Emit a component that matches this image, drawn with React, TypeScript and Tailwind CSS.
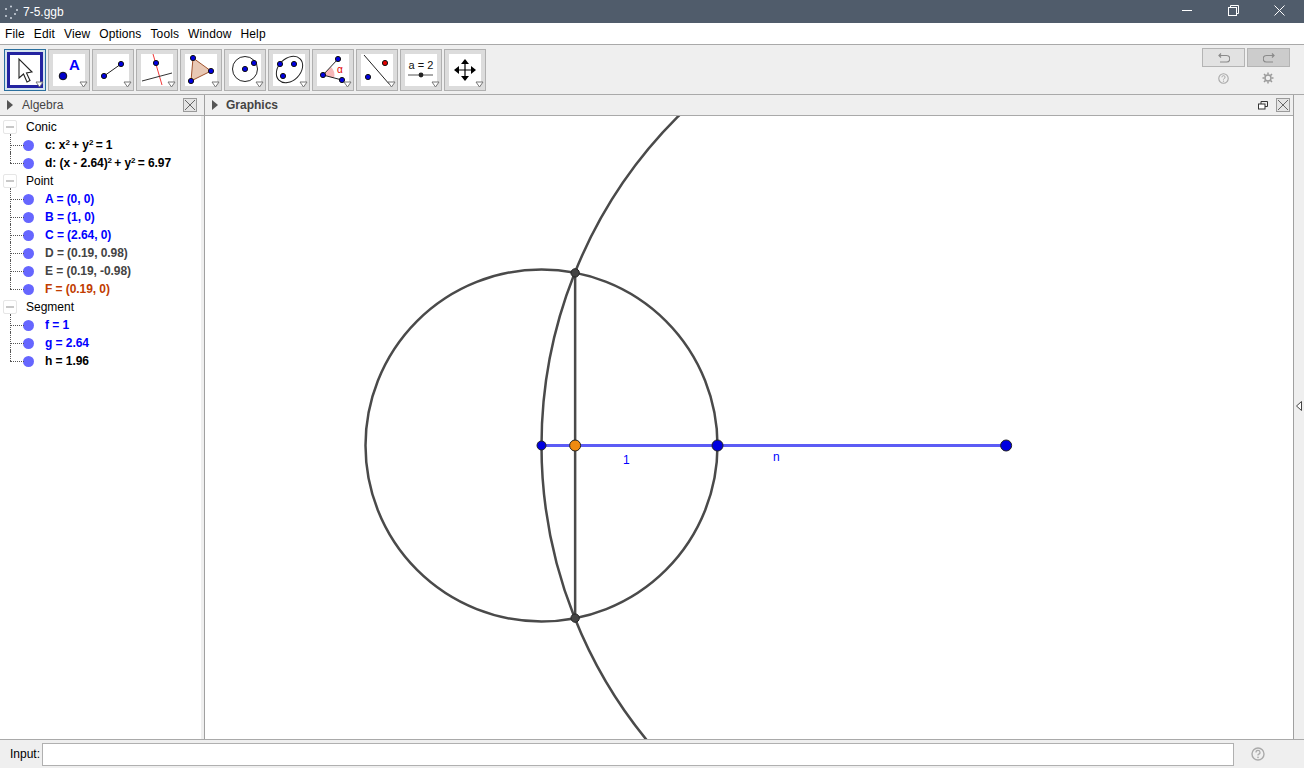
import type { ReactNode } from "react";

const MENU = ["File", "Edit", "View", "Options", "Tools", "Window", "Help"];

type TreeGroup = { title: string; items: { text: ReactNode; color: string }[] };

const SQ = <sup className="-mr-[1px] text-[8px] leading-none">2</sup>;

const TREE: TreeGroup[] = [
  {
    title: "Conic",
    items: [
      { text: <>c: x{SQ} + y{SQ} = 1</>, color: "text-black" },
      { text: <>d: (x - 2.64){SQ} + y{SQ} = 6.97</>, color: "text-black" },
    ],
  },
  {
    title: "Point",
    items: [
      { text: "A = (0, 0)", color: "text-[#0000ff]" },
      { text: "B = (1, 0)", color: "text-[#0000ff]" },
      { text: "C = (2.64, 0)", color: "text-[#0000ff]" },
      { text: "D = (0.19, 0.98)", color: "text-[#444444]" },
      { text: "E = (0.19, -0.98)", color: "text-[#444444]" },
      { text: "F = (0.19, 0)", color: "text-[#c13c00]" },
    ],
  },
  {
    title: "Segment",
    items: [
      { text: "f = 1", color: "text-[#0000ff]" },
      { text: "g = 2.64", color: "text-[#0000ff]" },
      { text: "h = 1.96", color: "text-black" },
    ],
  },
];

const B = "#0000e0";

// toolbar icons, all drawn in a 32x32 box
const TOOL_ICONS: ReactNode[] = [
  <path key="a" d="M10 5 L10 24 L14.5 20 L18 28 L21 26.5 L17.5 19 L23 18 Z" fill="#fff" stroke="#222" strokeWidth="1.1" />,
  <g key="b">
    <circle cx="10" cy="22" r="3.8" fill="#0000c8" stroke="#111" />
    <text x="16" y="16" fontSize="15" fontWeight="700" fill="#0000ff" fontFamily="Liberation Sans, sans-serif">A</text>
  </g>,
  <g key="c">
    <line x1="7" y1="22" x2="24" y2="10" stroke="#222" />
    <circle cx="7" cy="22" r="2.6" fill={B} stroke="#111" />
    <circle cx="24" cy="10" r="2.6" fill={B} stroke="#111" />
  </g>,
  <g key="d">
    <line x1="12" y1="0" x2="21" y2="31" stroke="#f03838" />
    <line x1="1" y1="27" x2="31" y2="19" stroke="#333" />
    <circle cx="15" cy="9" r="2.6" fill={B} stroke="#111" />
  </g>,
  <g key="e">
    <path d="M8 4 L26 17 L6 27 Z" fill="#e8c8b4" stroke="#a0522d" />
    <circle cx="8" cy="4" r="2.6" fill={B} stroke="#111" />
    <circle cx="26" cy="17" r="2.6" fill={B} stroke="#111" />
    <circle cx="6" cy="27" r="2.6" fill={B} stroke="#111" />
  </g>,
  <g key="f">
    <circle cx="16" cy="15" r="12.5" fill="none" stroke="#222" />
    <circle cx="16" cy="15" r="2.6" fill={B} stroke="#111" />
    <circle cx="25" cy="9" r="2.6" fill={B} stroke="#111" />
  </g>,
  <g key="g">
    <ellipse cx="16.5" cy="15.5" rx="15" ry="11" transform="rotate(-45 16.5 15.5)" fill="none" stroke="#222" />
    <circle cx="7" cy="10" r="2.6" fill={B} stroke="#111" />
    <circle cx="21" cy="10" r="2.6" fill={B} stroke="#111" />
    <circle cx="10" cy="22" r="2.6" fill={B} stroke="#111" />
  </g>,
  <g key="h">
    <path d="M6 21 L14 13 A 11 11 0 0 1 17 24 Z" fill="#f7b8b8" />
    <line x1="6" y1="21" x2="21" y2="5" stroke="#222" />
    <line x1="6" y1="21" x2="25" y2="26" stroke="#222" />
    <circle cx="6" cy="21" r="2.6" fill={B} stroke="#111" />
    <circle cx="21" cy="5" r="2.6" fill={B} stroke="#111" />
    <circle cx="25" cy="26" r="2.6" fill={B} stroke="#111" />
    <text x="20" y="19" fontSize="10" fill="#e00000" fontFamily="Liberation Sans, sans-serif">α</text>
  </g>,
  <g key="i">
    <line x1="3" y1="1" x2="29" y2="31" stroke="#222" />
    <circle cx="24" cy="9" r="2.6" fill="#e00000" stroke="#111" />
    <circle cx="7" cy="23" r="2.6" fill={B} stroke="#111" />
  </g>,
  <g key="j">
    <text x="16" y="15" textAnchor="middle" fontSize="11" fill="#111" fontFamily="Liberation Sans, sans-serif">a = 2</text>
    <line x1="3" y1="21" x2="28" y2="21" stroke="#555" />
    <circle cx="16" cy="21" r="2.4" fill="#222" />
  </g>,
  <g key="k" fill="#000">
    <path d="M16 5 L20 10 L12 10 Z" />
    <path d="M16 27 L20 22 L12 22 Z" />
    <path d="M5 16 L10 12 L10 20 Z" />
    <path d="M27 16 L22 12 L22 20 Z" />
    <path d="M16 9 V23 M9 16 H23" stroke="#000" strokeWidth="1.2" fill="none" />
  </g>,
];

function ToolButton({ icon, selected }: { icon: ReactNode; selected?: boolean }) {
  return (
    <div
      className={
        selected
          ? "relative flex h-[42px] w-[42px] items-center justify-center border border-[#2a6f9e] bg-[#d5e4ee]"
          : "relative flex h-[42px] w-[42px] items-center justify-center border border-[#b0b0b0] bg-[#dcdcdc]"
      }
    >
      <div
        className={
          selected
            ? "flex h-[36px] w-[36px] items-center justify-center border-[3px] border-[#2323a0] bg-white"
            : "flex h-[32px] w-[32px] items-center justify-center bg-white"
        }
      >
        <svg width="32" height="32" viewBox="0 0 32 32" className="shrink-0">
          {icon}
        </svg>
      </div>
      <svg width="9" height="7" viewBox="0 0 9 7" className="absolute right-[1px] bottom-[2px]">
        <path d="M1 1 H8 L4.5 6 Z" fill="#fff" stroke="#777" />
      </svg>
    </div>
  );
}

function CloseBox() {
  return (
    <div className="flex h-[14px] w-[14px] items-center justify-center border border-[#9a9a9a] bg-[#e4e4e4]">
      <svg width="12" height="12" viewBox="0 0 12 12">
        <path d="M1 1 L11 11 M11 1 L1 11" stroke="#666" strokeWidth="1" />
      </svg>
    </div>
  );
}

function PanelArrow() {
  return (
    <svg width="6" height="10" viewBox="0 0 6 10" className="shrink-0">
      <path d="M0 0 L6 5 L0 10 Z" fill="#555" />
    </svg>
  );
}

function HelpIcon({ size, stroke }: { size: number; stroke: string }) {
  return (
    <svg width={size} height={size} viewBox="0 0 14 14">
      <circle cx="7" cy="7" r="6" fill="none" stroke={stroke} strokeWidth="1.4" />
      <path d="M5 5.5 A2 2 0 1 1 7.4 7.3 L7 7.8 V8.6" fill="none" stroke={stroke} strokeWidth="1.2" />
      <circle cx="7" cy="10.4" r="0.8" fill={stroke} />
    </svg>
  );
}

function AlgebraTree() {
  return (
    <div className="flex flex-col pt-[2px] pl-[3px]">
      {TREE.map((group) => (
        <div key={group.title} className="flex flex-col">
          <div className="flex h-[18px] items-center">
            <div className="flex h-[14px] w-[14px] items-center justify-center rounded-[2px] border border-[#e6e6e6] bg-white">
              <div className="h-[2px] w-[8px] bg-[#c8c8c8]" />
            </div>
            <span className="ml-[9px] text-[12px] text-black">{group.title}</span>
          </div>
          {group.items.map((item, i) => (
            <div key={i} className="relative flex h-[18px] items-center">
              <div
                className={
                  i === group.items.length - 1
                    ? "absolute top-[-2px] left-[7px] h-[11px] border-l border-dotted border-[#555]"
                    : "absolute top-[-2px] left-[7px] h-[20px] border-l border-dotted border-[#555]"
                }
              />
              <div className="absolute top-[9px] left-[7px] w-[14px] border-t border-dotted border-[#555]" />
              <div className="ml-[20px] h-[11px] w-[11px] rounded-full bg-[#6666ff]" />
              <span className={"ml-[11px] text-[12px] font-bold tracking-[-0.06px] whitespace-nowrap " + item.color}>{item.text}</span>
            </div>
          ))}
        </div>
      ))}
    </div>
  );
}

function Pt({ x, y, r, fill }: { x: number; y: number; r: number; fill: string }) {
  return <circle cx={x} cy={y} r={r} fill={fill} stroke="#222" strokeWidth="1" />;
}

// Drawing coordinates are relative to the canvas origin (205, 116)
function GraphicsCanvas() {
  const ox = 541.5 - 205;
  const oy = 445.5 - 116;
  const u = 176;
  const cx2 = ox + 2.64 * u;
  const ix = ox + 0.19 * u + 0.2;
  return (
    <svg className="h-full w-full" viewBox="0 0 1088 623" preserveAspectRatio="none">
      <circle cx={ox} cy={oy} r={u} fill="none" stroke="#4a4a4a" strokeWidth="2.5" />
      <circle cx={cx2} cy={oy} r={cx2 - ox} fill="none" stroke="#4a4a4a" strokeWidth="2.5" />
      <line x1={ix} y1={oy - 172.6} x2={ix} y2={oy + 172.6} stroke="#4a4a4a" strokeWidth="2.5" />
      <line x1={ox} y1={oy} x2={cx2} y2={oy} stroke="#5c5cf5" strokeWidth="3" />
      <Pt x={ox} y={oy} r={4.5} fill="#0000e0" />
      <Pt x={ix} y={oy} r={5.5} fill="#f08a10" />
      <Pt x={ox + u} y={oy} r={5.5} fill="#0000e0" />
      <Pt x={cx2} y={oy} r={5.5} fill="#0000e0" />
      <Pt x={ix} y={oy - 172.6} r={4.2} fill="#444" />
      <Pt x={ix} y={oy + 172.6} r={4.2} fill="#444" />
      <text x={418} y={348} fontSize="12" fill="#0000ff" fontFamily="Liberation Sans, sans-serif">1</text>
      <text x={568} y={345} fontSize="12" fill="#0000ff" fontFamily="Liberation Sans, sans-serif">n</text>
    </svg>
  );
}

export default function App() {
  return (
    <div className="flex h-[768px] w-[1304px] flex-col overflow-hidden bg-[#efefef] font-['Liberation_Sans',Arial,sans-serif] text-[12px] text-black">
      {/* title bar */}
      <div className="flex h-[23px] shrink-0 items-center bg-[#505c6b] text-white">
        <svg width="16" height="16" viewBox="0 0 16 16" className="ml-[3px]" fill="#cfd6df">
          <circle cx="3" cy="5" r="1" />
          <circle cx="8" cy="2.5" r="1" />
          <circle cx="14" cy="6" r="1" />
          <circle cx="3" cy="12" r="1" />
          <circle cx="12" cy="10" r="1" />
          <circle cx="8" cy="14" r="1" />
        </svg>
        <span className="ml-[4px] text-[12px]">7-5.ggb</span>
        <div className="mr-[2px] ml-auto flex items-center pb-[2px]">
          <div className="flex w-[46px] justify-center">
            <div className="h-px w-[10px] bg-white" />
          </div>
          <div className="flex w-[46px] justify-center">
            <svg width="11" height="11" viewBox="0 0 11 11" fill="none" stroke="#fff">
              <rect x="0.5" y="2.5" width="8" height="8" />
              <path d="M2.5 2.5 V0.5 H10.5 V8.5 H8.5" />
            </svg>
          </div>
          <div className="flex w-[46px] justify-center">
            <svg width="11" height="11" viewBox="0 0 11 11" stroke="#fff">
              <path d="M0.5 0.5 L10.5 10.5 M10.5 0.5 L0.5 10.5" />
            </svg>
          </div>
        </div>
      </div>

      {/* menu */}
      <div className="flex h-[22px] shrink-0 items-center gap-[9px] border-b border-[#a9a9a9] bg-white pl-[5px] text-[12px] tracking-[0.12px]">
        {MENU.map((m) => (
          <span key={m}>{m}</span>
        ))}
      </div>

      {/* toolbar */}
      <div className="flex h-[50px] shrink-0 items-center border-b border-[#a9a9a9] bg-[#efefef] pl-[4px]">
        <div className="flex gap-[2px] pt-[1px]">
          {TOOL_ICONS.map((icon, i) => (
            <ToolButton key={i} icon={icon} selected={i === 0} />
          ))}
        </div>
        <div className="mt-[3px] mr-[14px] ml-auto flex flex-col items-center gap-[5px] self-start">
          <div className="flex gap-[2px]">
            <div className="flex h-[19px] w-[43px] items-center justify-center border border-[#b4b4b4] bg-[#e2e2e2]">
              <svg width="12" height="10" viewBox="0 0 12 10" fill="none" stroke="#8a8a8a" strokeWidth="1.2">
                <path d="M1 2.5 H8.5 A3 3 0 0 1 8.5 9 H2 M3 0.5 L1 2.5 L3 4.5" />
              </svg>
            </div>
            <div className="flex h-[19px] w-[43px] items-center justify-center border border-[#b4b4b4] bg-[#cccccc]">
              <svg width="12" height="10" viewBox="0 0 12 10" fill="none" stroke="#8a8a8a" strokeWidth="1.2">
                <path d="M11 2.5 H3.5 A3 3 0 0 0 3.5 9 H10 M9 0.5 L11 2.5 L9 4.5" />
              </svg>
            </div>
          </div>
          <div className="flex w-full items-center justify-around">
            <HelpIcon size={11} stroke="#a8a8a8" />
            <svg width="12" height="12" viewBox="0 0 12 12" fill="none" stroke="#9a9a9a" strokeWidth="1.5">
              <circle cx="6" cy="6" r="3" />
              <path d="M6 0.5 V2.5 M6 9.5 V11.5 M0.5 6 H2.5 M9.5 6 H11.5 M2 2 L3.4 3.4 M8.6 8.6 L10 10 M10 2 L8.6 3.4 M3.4 8.6 L2 10" />
            </svg>
          </div>
        </div>
      </div>

      {/* main */}
      <div className="flex min-h-0 flex-1">
        <div className="flex w-[204px] shrink-0 flex-col">
          <div className="flex h-[21px] shrink-0 items-center border-b border-[#a9a9a9] bg-[#efefef] pr-[7px] pl-[7px]">
            <PanelArrow />
            <span className="ml-[9px] text-[12px] text-[#444]">Algebra</span>
            <div className="ml-auto">
              <CloseBox />
            </div>
          </div>
          <div className="flex flex-1">
            <div className="flex-1 bg-white">
              <AlgebraTree />
            </div>
            <div className="w-[3px] shrink-0 bg-[#efefef]" />
          </div>
        </div>
        <div className="flex min-w-0 flex-1 flex-col border-r border-l border-[#a0a0a0]">
          <div className="flex h-[21px] shrink-0 items-center border-b border-[#a9a9a9] bg-[#efefef] pr-[3px] pl-[7px]">
            <PanelArrow />
            <span className="ml-[8px] text-[12px] font-bold text-[#444]">Graphics</span>
            <div className="ml-auto flex items-center gap-[8px]">
              <svg width="10" height="9" viewBox="0 0 10 9" fill="none" stroke="#333">
                <rect x="0.5" y="3" width="6.5" height="5" fill="#fff" />
                <path d="M3 3 V0.5 H9.5 V5.5 H7" />
              </svg>
              <CloseBox />
            </div>
          </div>
          <div className="min-h-0 flex-1 bg-white">
            <GraphicsCanvas />
          </div>
        </div>
        <div className="flex w-[10px] shrink-0 items-center bg-[#efefef] pb-[22px]">
          <svg width="6" height="10" viewBox="0 0 6 10" className="ml-[2px]">
            <path d="M5.5 0.5 V9.5 L0.5 5 Z" fill="#fff" stroke="#444" />
          </svg>
        </div>
      </div>

      {/* input bar */}
      <div className="flex h-[29px] shrink-0 items-center border-t border-[#a9a9a9] bg-[#efefef] pl-[10px]">
        <span className="text-[12px]">Input:</span>
        <div className="ml-[2px] h-[23px] w-[1192px] border border-[#b0b0b0] bg-white" />
        <div className="ml-[17px]">
          <HelpIcon size={14} stroke="#aaaaaa" />
        </div>
      </div>
    </div>
  );
}
